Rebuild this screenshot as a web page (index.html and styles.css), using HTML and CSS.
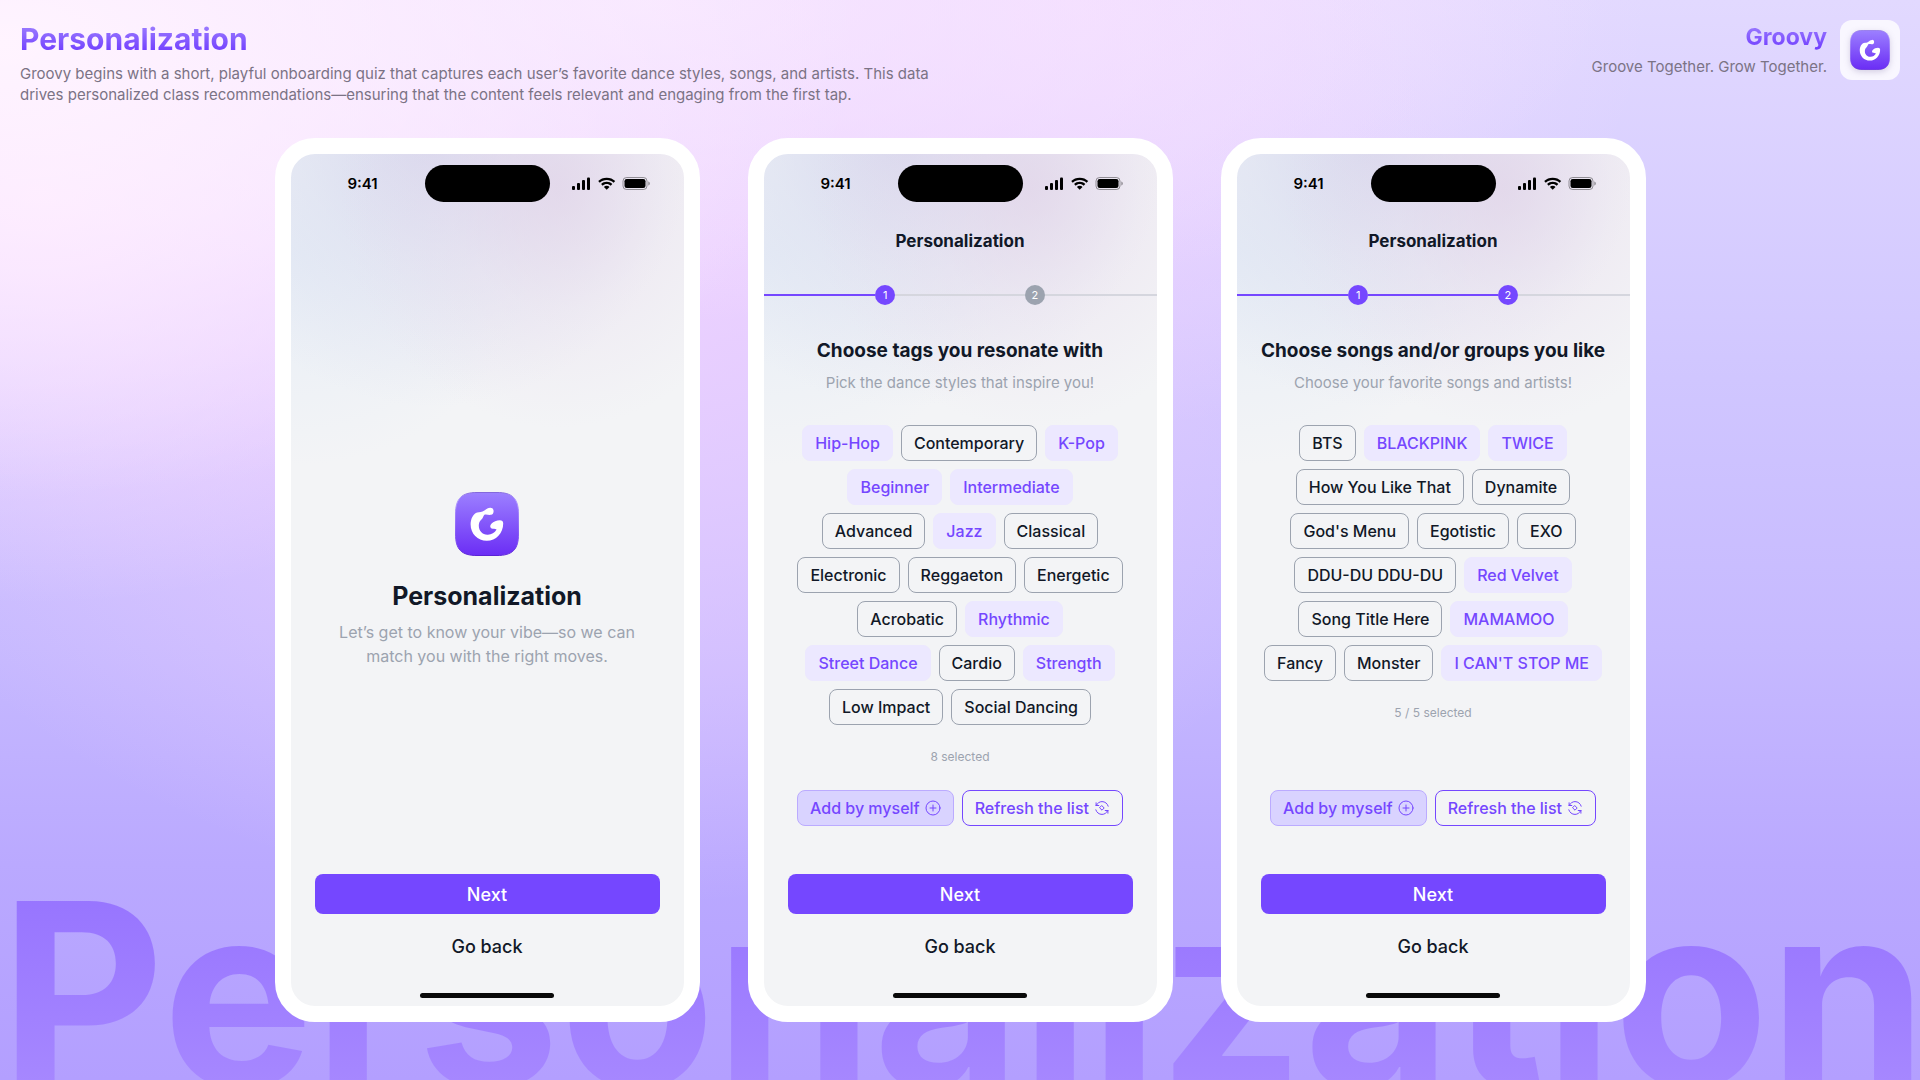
FILE: index.html
```html
<!DOCTYPE html>
<html lang="en">
<head>
  <meta charset="UTF-8">
  <meta name="viewport" content="width=device-width, initial-scale=1">
  <title>Groovy - Personalization</title>
  <link rel="stylesheet" href="styles.css">
</head>
<body>
  <!-- Shared icons -->
  <svg class="sprite" aria-hidden="true">
    <defs>
      <linearGradient id="logoFill" x1="0" y1="0" x2="0" y2="1">
        <stop offset="0" stop-color="#9c80ff"/>
        <stop offset="1" stop-color="#6b2df5"/>
      </linearGradient>
      <linearGradient id="logoEdge" x1="0" y1="0" x2="0" y2="1">
        <stop offset="0" stop-color="#8468dc"/>
        <stop offset="0.1" stop-color="#b39eff"/>
        <stop offset="0.8" stop-color="#7a48f2"/>
        <stop offset="1" stop-color="#5a22d4"/>
      </linearGradient>
    </defs>
    <symbol id="logo" viewBox="0 0 64 64">
      <path d="M0.5 22C0.5 6.5 6.5 0.5 22 0.5H42C57.5 0.5 63.5 6.5 63.5 22V42C63.5 57.5 57.5 63.5 42 63.5H22C6.5 63.5 0.5 57.5 0.5 42Z" fill="url(#logoFill)" stroke="url(#logoEdge)"/>
      <path d="M38.6 19.2C38.6 17 37.2 15.7 35.2 15.8C32.6 16 31.2 17.2 29.4 18.6C26.8 20.6 24.6 20.1 22.2 20.6C18.4 21.4 15.6 27 15.6 32.2C15.6 41.6 22.6 48.8 31.8 48.8C41 48.8 48.2 41 48.2 31.4C48.2 29.4 47 28.2 44.8 28.2C41.6 28.2 38.6 29.6 36.4 31.8C34.8 33.4 34.8 35.4 36.6 36.4C38.2 37.2 40 36.4 41.6 37.6C39.6 41 36.2 43 32.4 42.8C27.4 42.6 23.8 38.8 23.8 33.8C23.8 31.4 24.4 29.4 26.2 27.8C28.2 26 28.2 24 29.4 22.8C31 22 33.6 23.2 36 22.8C37.6 22.5 38.6 21.2 38.6 19.2Z" fill="#fff"/>
    </symbol>
    <symbol id="status" viewBox="0 0 78 13">
      <rect x="0" y="9" width="3" height="4" rx="1"/>
      <rect x="5" y="6" width="3" height="7" rx="1"/>
      <rect x="10" y="3" width="3" height="10" rx="1"/>
      <rect x="15" y="0.5" width="3" height="12.5" rx="1"/>
      <path d="M34.7 0.7C38 0.7 41 1.9 43.2 4.1L41.6 5.8C39.8 4.1 37.3 3.1 34.7 3.1S29.6 4.1 27.8 5.8L26.2 4.1C28.4 1.9 31.4 0.7 34.7 0.7Z"/>
      <path d="M34.7 4.8C36.9 4.8 38.9 5.6 40.3 7L38.7 8.7C37.6 7.7 36.2 7.1 34.7 7.1S31.8 7.7 30.7 8.7L29.1 7C30.5 5.6 32.5 4.8 34.7 4.8Z"/>
      <path d="M34.7 8.8C35.8 8.8 36.8 9.2 37.5 9.9L34.7 12.7L31.9 9.9C32.6 9.2 33.6 8.8 34.7 8.8Z"/>
      <rect x="51" y="0.5" width="24" height="12" rx="3.5" fill="none" stroke="#000" stroke-opacity="0.38"/>
      <rect x="52.5" y="2" width="21" height="9" rx="2.2"/>
      <path d="M76.3 4.5V8.5C77.2 8.2 77.8 7.4 77.8 6.5S77.2 4.8 76.3 4.5Z" fill-opacity="0.4"/>
    </symbol>
    <symbol id="plus" viewBox="0 0 16 16">
      <circle cx="8" cy="8" r="7"/>
      <path d="M8 5V11M5 8H11"/>
    </symbol>
    <symbol id="refresh" viewBox="0 0 16 16">
      <path d="M2.1 5.5H4.8M2.1 5.5V2.8M2.3 5.4C3.4 3 5.6 1.6 8 1.6C11 1.6 13.4 3.5 14.2 6.2"/>
      <path d="M13.9 10.5H11.2M13.9 10.5V13.2M13.7 10.6C12.6 13 10.4 14.4 8 14.4C5 14.4 2.6 12.5 1.8 9.8"/>
      <path d="M8 5.8L10.2 8L8 10.2L5.8 8Z"/>
    </symbol>
  </svg>

  <div class="page">
    <div class="watermark" aria-hidden="true">Personalization</div>

    <header class="page-header">
      <div class="intro">
        <h1>Personalization</h1>
        <p>Groovy begins with a short, playful onboarding quiz that captures each user’s favorite dance styles, songs, and artists. This data<br>drives personalized class recommendations—ensuring that the content feels relevant and engaging from the first tap.</p>
      </div>
      <div class="brand">
        <div class="brand-text">
          <strong>Groovy</strong>
          <p>Groove Together. Grow Together.</p>
        </div>
        <div class="brand-logo"><svg width="40" height="40"><use href="#logo"/></svg></div>
      </div>
    </header>

    <main class="phones">
      <!-- Welcome -->
      <section class="phone">
        <div class="status-bar">
          <span class="time">9:41</span>
          <span class="island"></span>
          <svg class="status-icons" width="78" height="13"><use href="#status"/></svg>
        </div>
        <div class="welcome">
          <svg width="64" height="64"><use href="#logo"/></svg>
          <h2>Personalization</h2>
          <p>Let’s get to know your vibe—so we can<br>match you with the right moves.</p>
        </div>
        <div class="footer">
          <button type="button" class="btn-next">Next</button>
          <button type="button" class="btn-back">Go back</button>
        </div>
        <div class="home-bar"></div>
      </section>

      <!-- Step 1: tags -->
      <section class="phone">
        <div class="status-bar">
          <span class="time">9:41</span>
          <span class="island"></span>
          <svg class="status-icons" width="78" height="13"><use href="#status"/></svg>
        </div>
        <div class="nav-title">Personalization</div>
        <div class="stepper">
          <span class="line done"></span>
          <span class="step done">1</span>
          <span class="line between"></span>
          <span class="step">2</span>
          <span class="line"></span>
        </div>
        <div class="question">
          <h2>Choose tags you resonate with</h2>
          <p>Pick the dance styles that inspire you!</p>
        </div>
        <div class="chips">
          <div class="chip-row">
            <button type="button" class="chip selected" aria-pressed="true">Hip-Hop</button>
            <button type="button" class="chip" aria-pressed="false">Contemporary</button>
            <button type="button" class="chip selected" aria-pressed="true">K-Pop</button>
          </div>
          <div class="chip-row">
            <button type="button" class="chip selected" aria-pressed="true">Beginner</button>
            <button type="button" class="chip selected" aria-pressed="true">Intermediate</button>
          </div>
          <div class="chip-row">
            <button type="button" class="chip" aria-pressed="false">Advanced</button>
            <button type="button" class="chip selected" aria-pressed="true">Jazz</button>
            <button type="button" class="chip" aria-pressed="false">Classical</button>
          </div>
          <div class="chip-row">
            <button type="button" class="chip" aria-pressed="false">Electronic</button>
            <button type="button" class="chip" aria-pressed="false">Reggaeton</button>
            <button type="button" class="chip" aria-pressed="false">Energetic</button>
          </div>
          <div class="chip-row">
            <button type="button" class="chip" aria-pressed="false">Acrobatic</button>
            <button type="button" class="chip selected" aria-pressed="true">Rhythmic</button>
          </div>
          <div class="chip-row">
            <button type="button" class="chip selected" aria-pressed="true">Street Dance</button>
            <button type="button" class="chip" aria-pressed="false">Cardio</button>
            <button type="button" class="chip selected" aria-pressed="true">Strength</button>
          </div>
          <div class="chip-row">
            <button type="button" class="chip" aria-pressed="false">Low Impact</button>
            <button type="button" class="chip" aria-pressed="false">Social Dancing</button>
          </div>
        </div>
        <p class="count">8 selected</p>
        <div class="actions">
          <button type="button" class="chip add">Add by myself <svg class="icon" width="16" height="16"><use href="#plus"/></svg></button>
          <button type="button" class="chip refresh">Refresh the list <svg class="icon" width="16" height="16"><use href="#refresh"/></svg></button>
        </div>
        <div class="footer">
          <button type="button" class="btn-next">Next</button>
          <button type="button" class="btn-back">Go back</button>
        </div>
        <div class="home-bar"></div>
      </section>

      <!-- Step 2: songs and groups -->
      <section class="phone">
        <div class="status-bar">
          <span class="time">9:41</span>
          <span class="island"></span>
          <svg class="status-icons" width="78" height="13"><use href="#status"/></svg>
        </div>
        <div class="nav-title">Personalization</div>
        <div class="stepper">
          <span class="line done"></span>
          <span class="step done">1</span>
          <span class="line between done"></span>
          <span class="step done">2</span>
          <span class="line"></span>
        </div>
        <div class="question">
          <h2>Choose songs and/or groups you like</h2>
          <p>Choose your favorite songs and artists!</p>
        </div>
        <div class="chips">
          <div class="chip-row">
            <button type="button" class="chip" aria-pressed="false">BTS</button>
            <button type="button" class="chip selected" aria-pressed="true">BLACKPINK</button>
            <button type="button" class="chip selected" aria-pressed="true">TWICE</button>
          </div>
          <div class="chip-row">
            <button type="button" class="chip" aria-pressed="false">How You Like That</button>
            <button type="button" class="chip" aria-pressed="false">Dynamite</button>
          </div>
          <div class="chip-row">
            <button type="button" class="chip" aria-pressed="false">God's Menu</button>
            <button type="button" class="chip" aria-pressed="false">Egotistic</button>
            <button type="button" class="chip" aria-pressed="false">EXO</button>
          </div>
          <div class="chip-row">
            <button type="button" class="chip" aria-pressed="false">DDU-DU DDU-DU</button>
            <button type="button" class="chip selected" aria-pressed="true">Red Velvet</button>
          </div>
          <div class="chip-row">
            <button type="button" class="chip" aria-pressed="false">Song Title Here</button>
            <button type="button" class="chip selected" aria-pressed="true">MAMAMOO</button>
          </div>
          <div class="chip-row">
            <button type="button" class="chip" aria-pressed="false">Fancy</button>
            <button type="button" class="chip" aria-pressed="false">Monster</button>
            <button type="button" class="chip selected" aria-pressed="true">I CAN'T STOP ME</button>
          </div>
        </div>
        <p class="count">5 / 5 selected</p>
        <div class="actions">
          <button type="button" class="chip add">Add by myself <svg class="icon" width="16" height="16"><use href="#plus"/></svg></button>
          <button type="button" class="chip refresh">Refresh the list <svg class="icon" width="16" height="16"><use href="#refresh"/></svg></button>
        </div>
        <div class="footer">
          <button type="button" class="btn-next">Next</button>
          <button type="button" class="btn-back">Go back</button>
        </div>
        <div class="home-bar"></div>
      </section>
    </main>
  </div>
</body>
</html>
```
FILE: styles.css
```css
* {
  box-sizing: border-box;
}
body {
  margin: 0;
  font-family: Inter, 'Liberation Sans', sans-serif;
  color: #111827;
}
h1, h2, p {
  margin: 0;
}
button {
  font-family: inherit;
  cursor: pointer;
}
.sprite {
  position: absolute;
  width: 0;
  height: 0;
}

/* Page */
.page {
  position: relative;
  min-height: 100vh;
  overflow: hidden;
  background:
    radial-gradient(ellipse 45% 42% at 0% 4%, #fff4ff 0%, rgba(255, 244, 255, 0.6) 40%, rgba(255, 244, 255, 0) 100%),
    radial-gradient(ellipse 50% 30% at 34% 0%, rgba(250, 234, 255, 0.8) 0%, rgba(248, 230, 255, 0) 100%),
    radial-gradient(ellipse 30% 38% at 2% 18%, #fbe0ff 0%, rgba(248, 218, 255, 0) 100%),
    radial-gradient(ellipse 44% 60% at 32% 24%, rgba(240, 210, 255, 0.9) 0%, rgba(236, 206, 255, 0.5) 50%, rgba(232, 204, 255, 0) 100%),
    radial-gradient(ellipse 30% 40% at 56% 0%, rgba(243, 222, 255, 0.9) 0%, rgba(243, 222, 255, 0) 100%),
    linear-gradient(180deg, #e2d9ff 0%, #d0c6ff 35%, #c6b9ff 60%, #baa9ff 80%, #b39fff 100%);
}
.watermark {
  position: absolute;
  left: 0;
  right: 0;
  top: 867px;
  text-align: center;
  font-size: 254px;
  font-weight: 700;
  line-height: 254px;
  white-space: nowrap;
  background: linear-gradient(180deg, #9572ff 0%, #a98bff 100%);
  background-clip: text;
  -webkit-background-clip: text;
  color: transparent;
}
.page-header {
  position: relative;
  display: flex;
  justify-content: space-between;
  align-items: flex-start;
  padding: 20px 20px 0;
}
.page-header p {
  font-size: 15px;
  line-height: 21px;
  color: #7b7385;
}
.intro h1,
.brand strong {
  display: block;
  background: linear-gradient(180deg, #9b7cff 15%, #6f3bff 85%);
  background-clip: text;
  -webkit-background-clip: text;
  color: transparent;
}
.intro h1 {
  width: fit-content;
  margin-bottom: 4px;
  font-size: 30px;
  font-weight: 700;
  line-height: 39px;
}
.brand {
  display: flex;
  gap: 13px;
  text-align: right;
}
.brand strong {
  margin-bottom: 1px;
  font-size: 23px;
  font-weight: 700;
  line-height: 35px;
}
.brand-logo {
  display: flex;
  align-items: center;
  justify-content: center;
  width: 60px;
  height: 60px;
  border-radius: 12px;
  background: #f9f7ff;
}
.brand-logo svg {
  filter: drop-shadow(0 2px 3px rgba(60, 40, 110, 0.2));
}

/* Phones */
.phones {
  position: relative;
  display: flex;
  justify-content: center;
  gap: 48px;
  padding: 33px 20px 58px;
}
.phone {
  display: flex;
  flex-direction: column;
  align-items: center;
  width: 425px;
  min-height: 884px;
  border: 16px solid #fff;
  border-radius: 40px;
  background-color: #f3f4f6;
  background-image:
    radial-gradient(ellipse 220px 240px at 68% 4%, rgba(224, 206, 230, 0.6) 0%, rgba(230, 216, 236, 0.3) 50%, rgba(236, 226, 240, 0) 100%),
    radial-gradient(ellipse 260px 270px at 36% -2%, rgba(208, 208, 235, 0.75) 0%, rgba(214, 216, 238, 0.4) 50%, rgba(222, 226, 242, 0) 100%),
    radial-gradient(ellipse 240px 210px at 0% 12%, rgba(226, 235, 246, 0.7) 0%, rgba(230, 236, 246, 0) 100%);
  background-origin: padding-box;
  background-repeat: no-repeat;
  text-align: center;
}
.status-bar {
  display: grid;
  grid-template-columns: 1fr 125px 1fr;
  align-items: center;
  width: 100%;
  padding-top: 11px;
}
.time {
  padding-left: 10px;
  font-size: 15px;
  font-weight: 600;
  line-height: 20px;
  color: #000;
}
.island {
  height: 37px;
  border-radius: 19px;
  background: #000;
}
.status-icons {
  justify-self: end;
  margin-right: 34px;
}
.nav-title {
  margin-top: 27px;
  font-size: 17px;
  font-weight: 700;
  line-height: 24px;
}

/* Stepper */
.stepper {
  display: flex;
  align-items: center;
  width: 100%;
  margin-top: 32px;
}
.line {
  flex: 112;
  height: 2px;
  background: #d5d6de;
}
.line.between {
  flex: 130;
}
.step {
  width: 20px;
  height: 20px;
  border-radius: 50%;
  background: #9ca3af;
  color: #fff;
  font-size: 11px;
  line-height: 20px;
}
.line.done,
.step.done {
  background: #7547ff;
}

.question h2 {
  margin-top: 32px;
  font-size: 19px;
  font-weight: 700;
  line-height: 28px;
}
.question p {
  margin-top: 8px;
  font-size: 15px;
  line-height: 20px;
  color: #9ca3af;
}

/* Chips */
.chips {
  display: flex;
  flex-direction: column;
  gap: 8px;
  margin-top: 32px;
}
.chip-row,
.actions {
  display: flex;
  justify-content: center;
  gap: 8px;
}
.chip {
  height: 36px;
  padding: 0 12px;
  border: 1px solid #9ca3af;
  border-radius: 8px;
  background: transparent;
  color: #111827;
  font-size: 16px;
  font-weight: 500;
  line-height: 24px;
  white-space: nowrap;
}
.chip.selected {
  border-color: #ece8ff;
  background: #ece8ff;
  color: #7547ff;
}
.chip.add,
.chip.refresh {
  display: flex;
  align-items: center;
  gap: 5px;
  border-color: #7547ff;
  color: #7547ff;
}
.chip.add {
  border-color: #bbabff;
  background: #d9d3ff;
}
.icon {
  fill: none;
  stroke: #7547ff;
  stroke-linecap: round;
  stroke-linejoin: round;
}
.count {
  margin-top: 24px;
  font-size: 12px;
  line-height: 16px;
  color: #9ca3af;
}
.actions {
  margin-top: auto;
}

/* Welcome */
.welcome {
  display: flex;
  flex: 1;
  flex-direction: column;
  align-items: center;
  justify-content: center;
  padding-top: 132px;
}
.welcome h2 {
  margin-top: 24px;
  font-size: 25px;
  font-weight: 700;
  line-height: 32px;
}
.welcome p {
  margin-top: 8px;
  font-size: 16px;
  line-height: 24px;
  color: #9ca3af;
}

/* Footer */
.footer {
  display: flex;
  flex-direction: column;
  gap: 12px;
  width: 100%;
  padding: 48px 24px 27px;
}
.btn-next,
.btn-back {
  height: 40px;
  border: none;
  border-radius: 8px;
  background: transparent;
  color: #111827;
  font-size: 18px;
  font-weight: 500;
}
.btn-next {
  background: #7547ff;
  color: #fff;
}
.home-bar {
  width: 134px;
  height: 5px;
  margin-bottom: 8px;
  border-radius: 3px;
  background: #0a0a0a;
}
```
